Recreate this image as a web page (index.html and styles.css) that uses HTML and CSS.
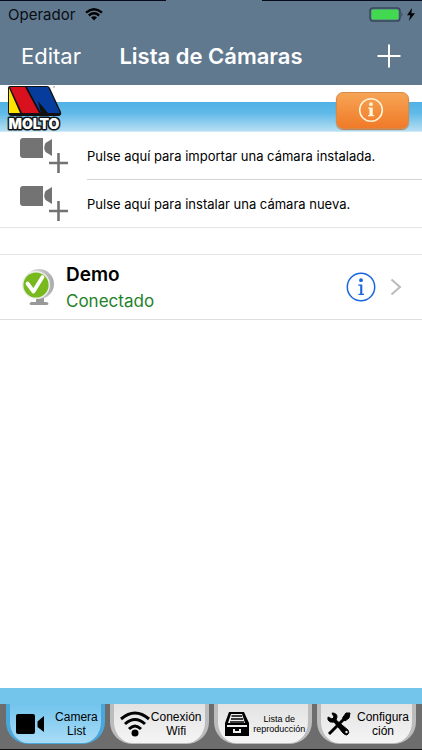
FILE: index.html
```html
<!DOCTYPE html>
<html lang="es">
<head>
<meta charset="utf-8">
<meta name="viewport" content="width=device-width, initial-scale=1">
<title>Lista de Cámaras</title>
<link rel="stylesheet" href="styles.css">
</head>
<body>
<div class="app">
  <header class="top">
    <div class="status">
      <span>Operador</span>
      <svg class="status-wifi" viewBox="0 0 18 13" width="18" height="13" fill="none" stroke="#000" stroke-width="2.4"><path d="M1 4.6Q9-2 17 4.6M3.8 7.5Q9 3.2 14.2 7.5"/><path d="M6 9.3Q9 7 12 9.3L9 12.6Z" fill="#000" stroke="none"/></svg>
      <svg class="battery" viewBox="0 0 47 16" width="47" height="16"><rect x="1" y="1" width="30" height="13" rx="3" fill="#60798f" stroke="#35465a" stroke-width="1.4"/><rect x="2.5" y="2.5" width="27" height="10" rx="1.5" fill="#42d84f"/><path d="M32.5 5q2 2.500 0 5z" fill="#35465a"/><path d="M43 1L38 8.300H41.300L39.800 14L46 6.300H42.300Z" fill="#000"/></svg>
    </div>
    <div class="nav">
      <button class="edit" type="button">Editar</button>
      <h1>Lista de Cámaras</h1>
      <button class="add" type="button" aria-label="+"><svg viewBox="0 0 24 24" width="24" height="24" stroke="#fff" stroke-width="2"><path d="M12 .5v23M.5 12h23"/></svg></button>
    </div>
  </header>

  <div class="brand">
    <svg class="logo" viewBox="0 0 58 48" width="58" height="48">
      <path d="M4 1H41Q43 1 44 3L55 27Q56 31 52 31H6Q2 31 2 27V3Q2 1 4 1Z" fill="#111"/>
      <path d="M3 3V28H14Z" fill="#ffe500"/>
      <path d="M4 2H19L33 28H16Z" fill="#d9101e"/>
      <path d="M21 2H42L54 28H42L32 16L35 28Z" fill="#063d9c"/>
      <path d="M20 2L34 28" fill="none" stroke="#111" stroke-width="1"/>
      <circle cx="48" cy="2" r="1" fill="#bba"/>
      <text class="logo-text" x="28" y="44" text-anchor="middle">MOLTO</text>
    </svg>
    <button class="info-main" type="button" aria-label="i"><svg viewBox="0 0 26 26" width="26" height="26" fill="none" stroke="#fff3d8" stroke-width="1.6"><circle cx="13" cy="13" r="11.300"/><circle cx="13" cy="7.200" r="1.900" fill="#fff3d8" stroke="none"/><path d="M10.200 10.500H14.800V18H16.200V19.300H10V18H11.400V11.800H10.200Z" fill="#fff3d8" stroke="none"/></svg></button>
  </div>

  <main>
    <ul class="actions">
      <li><button type="button"><svg viewBox="0 0 48 36" width="48" height="36"><path d="M3 0H23V20H3Q0 20 0 17V3Q0 0 3 0Z" fill="#737373"/><path d="M32 1V18L25.500 14Q23 9.500 25.500 5Z" fill="#737373"/><path d="M38.500 15V35M29 25H48" stroke="#737373" stroke-width="2.600"/></svg><span>Pulse aquí para importar una cámara instalada.</span></button></li>
      <li><button type="button"><svg viewBox="0 0 48 36" width="48" height="36"><path d="M3 0H23V20H3Q0 20 0 17V3Q0 0 3 0Z" fill="#737373"/><path d="M32 1V18L25.500 14Q23 9.500 25.500 5Z" fill="#737373"/><path d="M38.500 15V35M29 25H48" stroke="#737373" stroke-width="2.600"/></svg><span>Pulse aquí para instalar una cámara nueva.</span></button></li>
    </ul>
    <section class="camera">
      <svg class="camera-status" viewBox="0 0 34 38" width="34" height="38">
        <defs><linearGradient id="shell"><stop offset="0" stop-color="#eee"/><stop offset="1" stop-color="#aaa"/></linearGradient></defs>
        <path d="M14 29H22V34H25Q28 36 25 37H9Q6 36 9 34H14Z" fill="#999"/>
        <circle cx="17" cy="16" r="15" fill="url(#shell)"/><circle cx="14" cy="17" r="14" fill="#eee"/><circle cx="14" cy="17" r="12.600" fill="#78b91d"/>
        <path d="M5.500 15.500L11.500 23.500L20.500 9" fill="none" stroke="#fff" stroke-width="3.800" stroke-linecap="round" stroke-linejoin="round"/>
      </svg>
      <div class="camera-text"><h2>Demo</h2><p>Conectado</p></div>
      <button class="info" type="button" aria-label="i"><svg viewBox="0 0 30 30" width="30" height="30" fill="none" stroke="#1766df" stroke-width="1.500"><circle cx="15" cy="15" r="13.700"/><circle cx="15" cy="8.200" r="1.900" fill="#1766df" stroke="none"/><path d="M12.300 12.500H16.300V21.700H18V23H12.500V21.700H14.200V13.800H12.300Z" fill="#1766df" stroke="none"/></svg></button>
      <svg viewBox="0 0 12 18" width="12" height="18" fill="none" stroke="#bbb" stroke-width="2"><path d="M1.500 1.500L10 9L1.500 16.500"/></svg>
    </section>
  </main>

  <nav class="tabs">
    <a class="tab active" href="#camaras"><svg viewBox="0 0 30 22" width="30" height="22"><path d="M2 1H17Q19 1 19 3V19Q19 21 17 21H2Q0 21 0 19V3Q0 1 2 1ZM28 3V19L21.500 14V8.500Z"/></svg><span>Camera<br>List</span></a>
    <a class="tab" href="#wifi"><svg viewBox="0 0 30 26" width="30" height="26" fill="none" stroke="#000" stroke-width="3"><path d="M1 8Q15-4 29 8M5 13Q15 4 25 13M9 18Q15 12 21 18"/><circle cx="15" cy="22" r="3.500" fill="#000" stroke="none"/></svg><span>Conexión<br>Wifi</span></a>
    <a class="tab small" href="#lista"><svg viewBox="0 0 26 26" width="26" height="26"><path d="M5 1H20L25 12V25H1V12Z"/><path d="M7 3H18L21 12H4ZM3 14H23V16H3ZM9 18V22H17V18H15V20H11V18Z" fill="#eee"/><path d="M7.500 5H18M7 8H19M6 11H20" stroke="#000" stroke-width="1.300"/></svg><span>Lista de<br>reproducción</span></a>
    <a class="tab" href="#config"><svg viewBox="0 0 24 24" width="24" height="24" fill="none" stroke="#000"><path d="M2 22L19 5" stroke-width="3"/><path d="M15.500 6L19 1L23 1L22 6L18 9Z" fill="#000"/><path d="M5 1Q10 1 10 5L9 8L21 18Q23 21 20 23Q18 23 16 21L7 10Q3 11 1 8V5L5 7L7 5Z" fill="#000"/><circle cx="19.500" cy="20" r="1.200" fill="#eee" stroke="none"/></svg><span>Configura<br>ción</span></a>
  </nav>
</div>
</body>
</html>
```
FILE: styles.css
```css
* { box-sizing: border-box; }
body { margin: 0; font-family: Inter, "Liberation Sans", sans-serif; color: #000; background: #fff; }
h1, h2, p, ul { margin: 0; padding: 0; }
button { border: 0; padding: 0; background: none; font: inherit; color: inherit; cursor: pointer; }
svg { display: block; flex: none; }
a { color: inherit; text-decoration: none; }
.app { min-height: 100vh; display: flex; flex-direction: column; }

.top { background: linear-gradient(90deg, #050b19 0 166px, transparent 166px 262px, #050b19 262px) top / 100% 1px no-repeat #60798f; color: #fff; }
.status { display: flex; align-items: center; gap: 10px; height: 29px; padding: 0 6px 0 8px; color: #0a0d12; font-size: 15px; }
.battery { margin-left: auto; }
.nav { display: grid; grid-template-columns: 1fr auto 1fr; align-items: center; height: 56px; padding: 0 21px 2px; }
.edit { justify-self: start; font-size: 22px; }
.nav h1 { font-size: 22px; font-weight: 600; line-height: 28px; }
.add { justify-self: end; }

.brand { display: flex; justify-content: space-between; align-items: center; height: 47px; padding: 0 13px 0 6px; background: linear-gradient(#fff 0 17px, #50b2e5 17px, #60b9e8 28px, #b6dff3 46px, #e8f4fa 47px); }
.logo { overflow: visible; }
.logo-text { font: 900 14px Inter, "Liberation Sans", sans-serif; fill: #fff; stroke: #111; stroke-width: 3px; stroke-linejoin: round; paint-order: stroke; }
.info-main { display: grid; place-items: center; width: 73px; height: 37px; margin-top: 3px; padding-right: 4px; border: 1px solid #d58a4c; border-radius: 7px; background: linear-gradient(#f6a555, #f07a28); box-shadow: 0 1px 1px #bb7c4c; }

main { flex: 1; }
.actions { list-style: none; border-bottom: 1px solid #e6e6e6; }
.actions button { display: flex; align-items: center; gap: 19px; width: 100%; height: 47px; padding-left: 20px; text-align: left; font-size: 13px; }
.actions span { display: flex; align-items: center; flex: 1; align-self: stretch; }
.actions li:first-child span { border-bottom: 1px solid #d4d4d6; }
.actions li:first-child button { height: 48px; }

.camera { display: flex; align-items: center; height: 66px; margin-top: 26px; padding: 0 20px 0 22px; border-top: 1px solid #e6e6e6; border-bottom: 1px solid #dedede; }
.camera-text { flex: 1; margin-left: 10px; padding-top: 1px; }
.camera h2 { font-size: 19px; font-weight: 600; line-height: 26px; }
.camera p { font-size: 17px; line-height: 26px; color: #238228; }
.info { margin-right: 14px; }

.tabs { display: grid; grid-template-columns: repeat(4, 1fr); gap: 5px; height: 62px; padding: 0 6px 5px; border-top: 16px solid #74c5ec; border-bottom: 1px solid #111; background: #6d6d6d; }
.tab { display: flex; align-items: center; justify-content: space-between; min-width: 0; padding: 0 3px 0 6px; border: solid #bcbcbc; border-width: 0 4px 1px; border-radius: 0 0 22px 22px; background: linear-gradient(#e2e2e2, #f5f5f5); font: 12px/14px "Liberation Sans", sans-serif; text-align: center; }
.tab span { min-width: 0; }
.tab.active { background: linear-gradient(#72c4ed, #a9dcf6); border-color: #4aa7dc; }
.tab.small { font-size: 9px; line-height: 10px; }
```
